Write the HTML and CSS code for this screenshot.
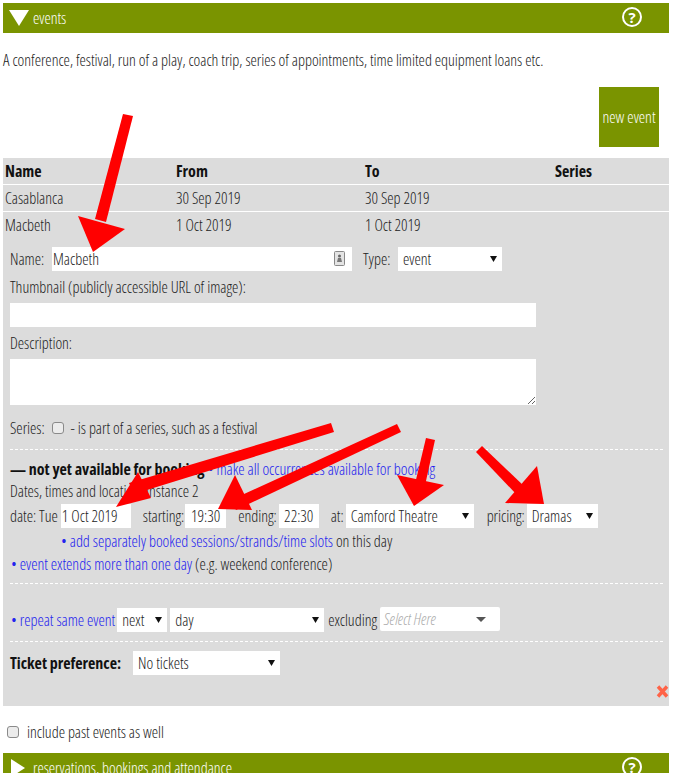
FILE: index.html
```html
<!DOCTYPE html>
<html lang="en">
<head>
    <meta charset="UTF-8">
    <title>Events</title>
    <link rel="stylesheet" href="styles.css">
</head>
<body>
    <div class="page">
        <div class="bar">
            <span class="tri-down"></span>
            <span class="bar-title">events</span>
            <span class="help">?</span>
        </div>
        <p class="intro">A conference, festival, run of a play, coach trip, series of appointments, time limited equipment loans etc.</p>
        <div class="actions">
            <button class="new-event" type="button">new event</button>
        </div>

        <div class="panel">
            <table class="events">
                <tr><th class="col-name">Name</th><th class="col-from">From</th><th class="col-to">To</th><th>Series</th></tr>
                <tr><td>Casablanca</td><td>30 Sep 2019</td><td>30 Sep 2019</td><td></td></tr>
                <tr><td>Macbeth</td><td>1 Oct 2019</td><td>1 Oct 2019</td><td></td></tr>
            </table>

            <form class="detail">
                <div class="row row-name">
                    <label class="lbl-name">Name:</label>
                    <span class="name-box">
                        <input class="field name-input" type="text" value="Macbeth">
                        <svg class="contact-icon" width="11" height="15" viewBox="0 0 11 15"><rect x="0.5" y="0.5" width="10" height="14" rx="1" fill="#e4e4e4" stroke="#888"/><circle cx="5.5" cy="5" r="1.5" fill="#666"/><path d="M3 11l1-4h3l1 4z" fill="#777"/></svg>
                    </span>
                    <label class="lbl-type">Type:</label>
                    <select class="field sel-type"><option>event</option></select>
                </div>
                <div class="stack-label thumb-label">Thumbnail (publicly accessible URL of image):</div>
                <input class="field wide" type="text">
                <div class="stack-label desc-label">Description:</div>
                <textarea class="field wide area"></textarea>
                <div class="row row-series">
                    <span>Series:</span>
                    <input class="check" type="checkbox">
                    <span>- is part of a series, such as a festival</span>
                </div>
                <hr class="dash dash-first">
                <div class="booking"><b>— not yet available for booking</b> <a href="#">• make all occurrences available for booking</a></div>
                <div class="dates-title">Dates, times and location: instance 2</div>
                <div class="row row-date">
                    <span>date: Tue</span>
                    <input class="field in-date" type="text" value="1 Oct 2019">
                    <span class="lbl-starting">starting:</span>
                    <input class="field in-time" type="text" value="19:30">
                    <span class="lbl-ending">ending:</span>
                    <input class="field in-time" type="text" value="22:30">
                    <span class="lbl-at">at:</span>
                    <select class="field sel-venue"><option>Camford Theatre</option></select>
                    <span class="lbl-pricing">pricing:</span>
                    <select class="field sel-pricing"><option>Dramas</option></select>
                </div>
                <div class="sessions"><a href="#">• add separately booked sessions/strands/time slots</a> on this day</div>
                <div class="extends"><a href="#">• event extends more than one day</a> (e.g. weekend conference)</div>
                <hr class="dash dash-second">
                <div class="row row-repeat">
                    <a href="#">• repeat same event</a>
                    <select class="field sel-next"><option>next</option></select>
                    <select class="field sel-day"><option>day</option></select>
                    <span class="lbl-excluding">excluding</span>
                    <div class="multi"><span class="multi-text">Select Here</span><span class="multi-caret"></span></div>
                </div>
                <hr class="dash dash-third">
                <div class="row row-ticket">
                    <b>Ticket preference:</b>
                    <select class="field sel-ticket"><option>No tickets</option></select>
                </div>
                <div class="remove-row">
                    <svg class="remove" width="13" height="13" viewBox="0 0 13 13"><path d="M2 1.5l9 10M11 1.5l-9 10" fill="none" stroke="#ff6347" stroke-width="3.4"/></svg>
                </div>
            </form>
        </div>

        <label class="past"><input class="check" type="checkbox"> include past events as well</label>

        <div class="bar">
            <span class="tri-right"></span>
            <span class="bar-title">reservations, bookings and attendance</span>
            <span class="help">?</span>
        </div>
    </div>

    <!-- annotation arrows drawn over the screenshot -->
    <svg class="arrows" width="673" height="773" viewBox="0 0 673 773">
        <g fill="#ff0000">
            <path d="M123 114l10 2-27 106-11-3z"/>
            <path d="M78 216l47 13-32 23z"/>
            <path d="M331 423l3 9-200 62-5-11z"/>
            <path d="M138 472l13 26-35 9z"/>
            <path d="M397 424l4 8-165 78-5-10z"/>
            <path d="M235 475l17 35-34 -1z"/>
            <path d="M426 438l9 2-11 50-10-2z"/>
            <path d="M397 475l47 10-30 21z"/>
            <path d="M476 452l6-6 44 42-9 7z"/>
            <path d="M537 466l7 38-39 -1z"/>
        </g>
    </svg>
</body>
</html>
```

FILE: styles.css
```css
html, body {
    margin: 0;
    height: 773px;
    overflow: hidden;
    background: #fff;
}
body {
    font-family: "Open Sans", "Liberation Sans", sans-serif;
    font-stretch: 75%;
    font-weight: 300;
    font-size: 16px;
    letter-spacing: -0.03px;
    color: #222;
}
.page {
    padding: 3px 4px 0 3px;
}
a {
    color: #2222ee;
    text-decoration: none;
}
b, th {
    font-weight: 700;
    color: #111;
}

/* green section bars */
.bar {
    display: flex;
    align-items: center;
    height: 30px;
    background: #7a9400;
    color: #fff;
}
.tri-down {
    width: 0;
    height: 0;
    margin-left: 6px;
    border-left: 10px solid transparent;
    border-right: 10px solid transparent;
    border-top: 16px solid #fff;
}
.tri-right {
    width: 0;
    height: 0;
    margin-left: 8px;
    border-top: 9px solid transparent;
    border-bottom: 9px solid transparent;
    border-left: 14px solid #fff;
}
.bar-title {
    margin-left: 4px;
}
.tri-right + .bar-title {
    margin-left: 8px;
}
.help {
    width: 16px;
    height: 16px;
    margin: -2px 27px 0 auto;
    border: 2.5px solid #fff;
    border-radius: 50%;
    font-size: 15px;
    font-weight: 700;
    font-stretch: 100%;
    line-height: 16px;
    text-align: center;
}

.intro {
    margin: 17px 0 0;
    line-height: 20px;
}
.actions {
    display: flex;
    justify-content: flex-end;
    padding-right: 10px;
    margin-top: 17px;
}
.new-event {
    width: 60px;
    height: 60px;
    padding: 0;
    border: none;
    background: #7a9400;
    color: #fff;
    font: inherit;
    font-stretch: 75%;
}

/* grey panel */
.panel {
    margin-top: 11px;
    height: 548px;
    background: #dcdcdc;
}
.events {
    width: 100%;
    border-collapse: collapse;
    table-layout: fixed;
}
.events th, .events td {
    padding: 0 2px;
    height: 26px;
    text-align: left;
}
.events tr + tr td {
    border-top: 1px solid #fff;
}
.col-name { width: 167px; }
.col-from { width: 185px; }
.col-to { width: 186px; }

.detail {
    padding: 0 6px 0 7px;
}
.row {
    display: flex;
    align-items: center;
}
.field {
    box-sizing: border-box;
    height: 24px;
    border: none;
    border-radius: 0;
    background: #fff;
    color: #222;
    font: inherit;
    font-stretch: 75%;
    padding: 0 1px;
    margin: 0;
}
select.field {
    appearance: none;
    padding-left: 5px;
    background-image: url("data:image/svg+xml,%3Csvg xmlns='http://www.w3.org/2000/svg' width='7' height='6'%3E%3Cpath d='M0 0h7L3.5 6z' fill='%23111'/%3E%3C/svg%3E");
    background-repeat: no-repeat;
    background-position: right 5px center;
}
.row-name {
    margin-top: 9px;
}
.lbl-name {
    width: 42px;
}
.name-box {
    position: relative;
    display: block;
    width: 300px;
    height: 24px;
}
.name-input {
    width: 100%;
}
.contact-icon {
    position: absolute;
    right: 7px;
    top: 4px;
}
.lbl-type {
    margin-left: 11px;
    width: 35px;
}
.sel-type { width: 104px; }
.stack-label {
    line-height: 20px;
}
.thumb-label {
    margin-top: 6px;
}
.wide {
    display: block;
    width: 526px;
}
.thumb-label + .wide {
    margin-top: 6px;
}
.desc-label {
    margin-top: 6px;
}
.area {
    height: 46px;
    margin-top: 6px;
}
.check {
    appearance: none;
    box-sizing: border-box;
    width: 12px;
    height: 12px;
    margin: 0;
    border: 1px solid #8a8a8a;
    border-radius: 3px;
    background: #ececec;
}
.row-series {
    margin-top: 13px;
    height: 20px;
}
.row-series .check {
    margin: 0 7px 0 7px;
}
.dash {
    margin: 0;
    border: none;
    border-top: 1px dashed #fff;
}
.dash-first { margin-top: 11px; }
.booking {
    margin-top: 9px;
    line-height: 20px;
}
.dates-title {
    margin-top: 2px;
    line-height: 20px;
}
.row-date {
    margin-top: 3px;
}
.in-date { width: 70px; margin-left: 3px; }
.lbl-starting { margin-left: 12px; }
.in-time { width: 41px; margin-left: 1px; text-align: center; }
.lbl-ending { margin-left: 12px; }
.lbl-ending + .in-time { width: 40px; margin-left: 2px; }
.lbl-at { margin-left: 12px; }
.sel-venue { width: 128px; margin-left: 2px; }
.lbl-pricing { margin-left: 13px; }
.sel-pricing { width: 71px; margin-left: 2px; }
.sessions {
    margin-top: 3px;
    padding-left: 51px;
    line-height: 20px;
}
.extends {
    margin-top: 3px;
    line-height: 20px;
    padding-left: 1px;
}
.dash-second { margin-top: 9px; }
.row-repeat {
    margin-top: 24px;
    padding-left: 1px;
}
.sel-next { width: 50px; margin-left: 2px; }
.sel-day { width: 154px; margin-left: 3px; }
.lbl-excluding { margin-left: 4px; }
.multi {
    display: flex;
    align-items: center;
    justify-content: space-between;
    box-sizing: border-box;
    width: 120px;
    height: 24px;
    margin-left: 3px;
    margin-top: -2px;
    padding: 0 14px 0 4px;
    background: #fff;
    border-radius: 2px;
}
.multi-text {
    color: #aaa;
    font-style: italic;
}
.multi-caret {
    width: 0;
    height: 0;
    border-left: 5px solid transparent;
    border-right: 5px solid transparent;
    border-top: 5px solid #555;
}
.dash-third { margin-top: 9px; }
.row-ticket {
    margin-top: 9px;
}
.row-ticket b { width: 123px; }
.sel-ticket { width: 147px; }
.remove-row {
    display: flex;
    justify-content: flex-end;
    margin: 10px -6px 0 0;
}
.past {
    display: flex;
    align-items: center;
    gap: 8px;
    height: 20px;
    margin: 16px 0 11px 4px;
}
.arrows {
    position: absolute;
    left: 0;
    top: 0;
    pointer-events: none;
}
```
